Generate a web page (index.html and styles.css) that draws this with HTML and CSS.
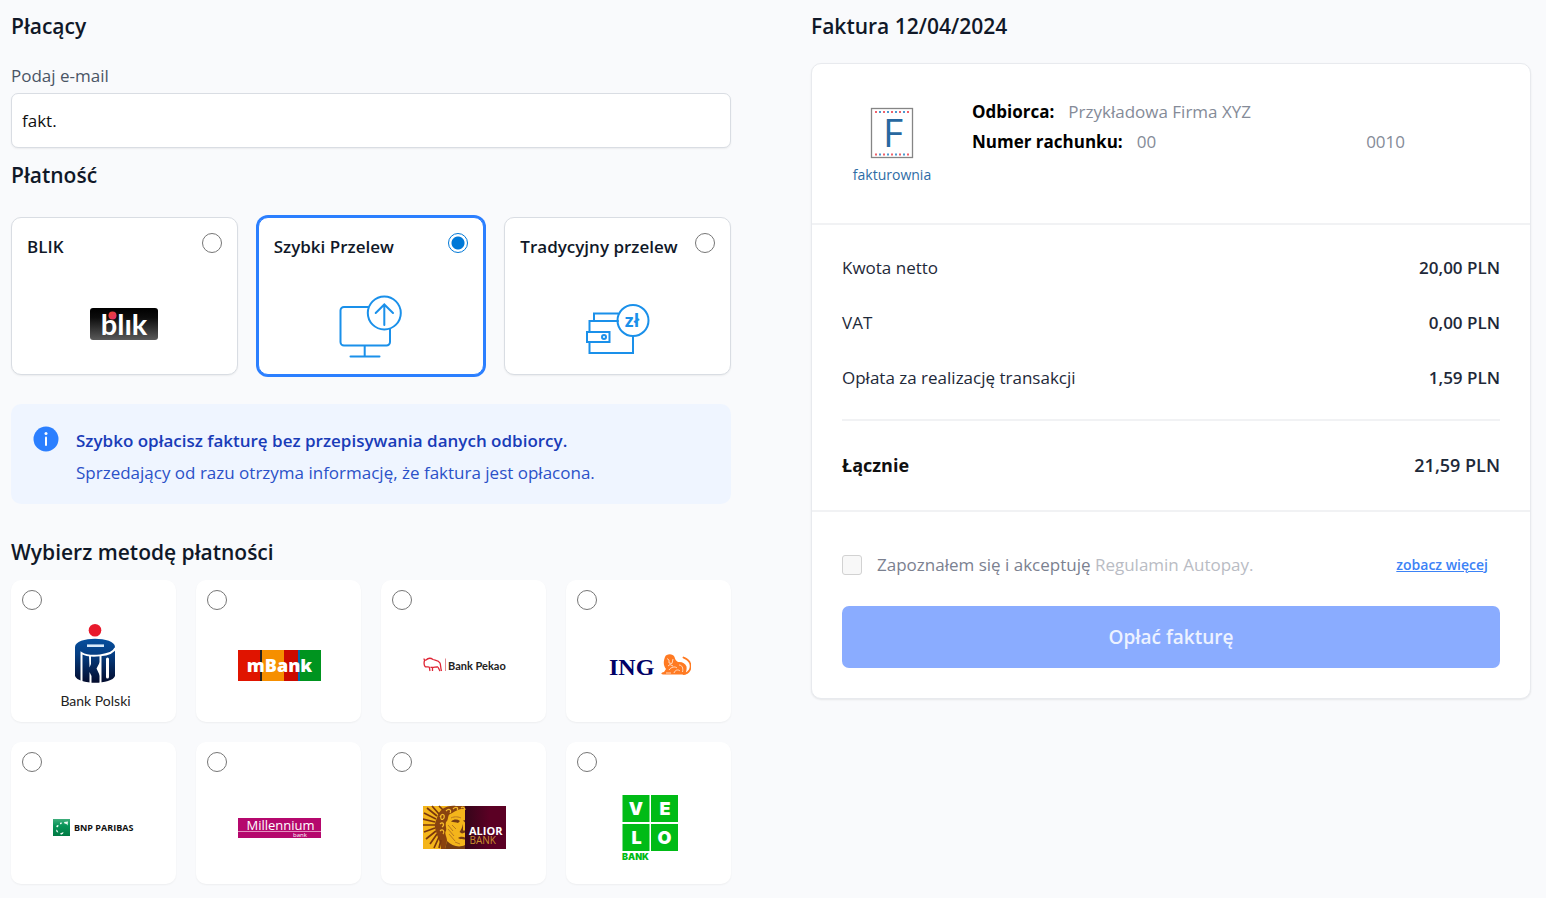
FILE: index.html
```html
<!DOCTYPE html>
<html lang="pl">
<head>
<meta charset="utf-8">
<meta name="viewport" content="width=device-width, initial-scale=1">
<title>Faktura 12/04/2024</title>
<link rel="stylesheet" href="styles.css">
</head>
<body>
<main class="page">
  <form class="payer">
    <h2 class="heading">Płacący</h2>
    <label class="field-label" for="email">Podaj e-mail</label>
    <input class="field" id="email" type="text" value="fakt.">

    <h2 class="heading heading-payment">Płatność</h2>
    <div class="types">
      <label class="type">
        <span class="type-head"><span class="type-name">BLIK</span><input class="radio" type="radio" name="type"></span>
        <svg class="type-art" viewBox="0 0 68 64" width="68" height="64" aria-hidden="true">
          <defs><linearGradient id="blik" x1="0" y1="0" x2="0" y2="1"><stop offset="0" stop-color="#000"/><stop offset=".3" stop-color="#0c0c0c"/><stop offset="1" stop-color="#5a5a5a"/></linearGradient>
          <linearGradient id="dot" x1="0" y1="0" x2="1" y2="1"><stop offset="0" stop-color="#e8452c"/><stop offset="1" stop-color="#e0306e"/></linearGradient></defs>
          <rect x="0" y="13" width="68" height="32" rx="3" fill="url(#blik)"/>
          <text class="t-blik" x="34" y="40" text-anchor="middle">blık</text>
          <circle cx="22.500" cy="20.500" r="4" fill="url(#dot)"/>
        </svg>
      </label>
      <label class="type type-selected">
        <span class="type-head"><span class="type-name">Szybki Przelew</span><input class="radio" type="radio" name="type" checked></span>
        <svg class="type-art line" viewBox="0 0 64 64" width="64" height="64" aria-hidden="true">
          <path d="M29 12H5a3.5 3.5 0 0 0-3.500 3.500V47A3.500 3.500 0 0 0 5 50.500H47.500A3.500 3.500 0 0 0 51 47V34M25.700 50.500V61M11.500 61.500H40.500"/>
          <circle cx="45.300" cy="18" r="16.500"/>
          <path d="M45.300 30V9.500M36.700 18L45.300 9.500L54 18"/>
        </svg>
      </label>
      <label class="type">
        <span class="type-head"><span class="type-name">Tradycyjny przelew</span><input class="radio" type="radio" name="type"></span>
        <svg class="type-art line" viewBox="0 0 64 64" width="64" height="64" aria-hidden="true">
          <path d="M8 26V18.500H32M32 26H3.500V37M3.500 47V58H47V41M1 37H23.500V47H1Z"/>
          <circle cx="18" cy="42" r="2"/>
          <circle cx="47" cy="25.500" r="15.500"/>
          <text class="t-zl" x="46" y="32" text-anchor="middle">zł</text>
        </svg>
      </label>
    </div>

    <div class="note">
      <svg class="note-icon" viewBox="0 0 26 26" width="26" height="26" aria-hidden="true"><circle cx="13" cy="13" r="12.500" fill="#2b7fff"/><circle cx="13" cy="7.500" r="1.500" fill="#fff"/><path d="M13 11.500V19" stroke="#fff" stroke-width="2" stroke-linecap="round"/></svg>
      <div>
        <p class="note-title">Szybko opłacisz fakturę bez przepisywania danych odbiorcy.</p>
        <p class="note-text">Sprzedający od razu otrzyma informację, że faktura jest opłacona.</p>
      </div>
    </div>

    <h2 class="heading heading-method">Wybierz metodę płatności</h2>
    <div class="banks">
      <label class="bank"><input class="radio" type="radio" name="bank" aria-label="PKO Bank Polski">
        <svg class="bank-logo" viewBox="0 0 83 92" width="83" height="92">
          <defs><linearGradient id="pko" x1="0" y1="0" x2="0" y2="1"><stop offset="0" stop-color="#064f9e"/><stop offset=".35" stop-color="#053e83"/><stop offset="1" stop-color="#030b2c"/></linearGradient></defs>
          <circle cx="42" cy="10.300" r="6.300" fill="#e8192c"/>
          <path d="M22 27C22 16 62 16 62 27V56C59 65 25 65 22 56Z" fill="url(#pko)"/>
          <path d="M62.500 28C59 36.500 36 37.500 28.500 33V62" fill="none" stroke="#fff" stroke-width="2"/>
          <path d="M47.500 35V64" stroke="#fff" stroke-width="2"/>
          <path d="M36 36H38V44L36.500 47.500ZM36.500 52L38.500 56V64H36.500ZM47.500 41L43.500 48.500L47.500 57Z" fill="#fff"/>
          <path d="M54.500 39V57" stroke="#fff" stroke-width="3" stroke-linecap="round"/>
          <path d="M34 25.700H51" stroke="#d8eafa" stroke-width="2.600"/>
          <text class="t-pko" x="42.500" y="86" text-anchor="middle">Bank Polski</text>
        </svg></label>
      <label class="bank"><input class="radio" type="radio" name="bank" aria-label="mBank">
        <svg class="bank-logo" viewBox="0 0 83 92" width="83" height="92">
          <path d="M0 30H22V61H0Z" fill="#e01400"/><path d="M22 30H24V61H22Z" fill="#26231f"/><path d="M24 30H46V61H24Z" fill="#f68f00"/><path d="M46 30H60V61H46Z" fill="#cc0a00"/><path d="M60 30H62V61H60Z" fill="#0068a8"/><path d="M62 30H83V61H62Z" fill="#00941f"/>
          <text class="t-mbank" x="41.500" y="51.500" text-anchor="middle">mBank</text>
        </svg></label>
      <label class="bank"><input class="radio" type="radio" name="bank" aria-label="Bank Pekao">
        <svg class="bank-logo" viewBox="0 0 83 92" width="83" height="92">
          <path d="M1 38.500C1 40 2 40.500 3 40C5 38 8 38 10 39.500C12.500 40.500 15.500 40.500 17 43C17.800 45 17.500 48 18.500 51M1.500 40.500C.8 43 1 45 2 46.500C3 47.500 4.500 46.500 6 47C7 48 6.500 50 7 51M7.500 47C9 48 12 47 14 47M9.500 48V51M14 46.500C16 47.500 15.500 49 17 51" fill="none" stroke="#df2535" stroke-width="1.300"/>
          <path d="M22.500 38.500V51" stroke="#e48a90" stroke-width="1"/>
          <text class="t-pekao" x="25" y="49.500">Bank Pekao</text>
        </svg></label>
      <label class="bank"><input class="radio" type="radio" name="bank" aria-label="ING">
        <svg class="bank-logo" viewBox="0 0 83 92" width="83" height="92">
          <text class="t-ing" x="1" y="54.500">ING</text>
          <path d="M57 37C58 33.500 65 33 66.500 37C67 39 68 41 70 42C74 41.500 77 43 78.500 46.500C79 49 78 52 77.500 54.500H55C52.500 54 53 52.500 56 52L58 49C55 45 55.500 41 57 37Z" fill="#ff7a22"/>
          <path d="M75.500 54C81 53.500 84 48 82 43C81 40 78.500 39 75.500 37.500" fill="none" stroke="#ff7a22" stroke-width="1.800" stroke-linecap="round"/>
          <path d="M59 38.500L61 40V43L64 43.500L65 39M60 46L62 44.500L65 46M61 50C63 47 67 46 69 48M66 53C67 50 70 49 72 51M71 45C74 45 75.500 48 74.500 52M58 53H63" fill="none" stroke="#ffe2cc" stroke-width=".9"/>
        </svg></label>
      <label class="bank"><input class="radio" type="radio" name="bank" aria-label="BNP Paribas">
        <svg class="bank-logo" viewBox="0 0 83 92" width="83" height="92">
          <defs><linearGradient id="bnp" x1="0" y1="0" x2="0" y2="1"><stop offset="0" stop-color="#3fae7c"/><stop offset=".4" stop-color="#079458"/><stop offset="1" stop-color="#007a43"/></linearGradient></defs>
          <rect x="0" y="37" width="17" height="17" fill="url(#bnp)"/>
          <path d="M11 40L15 39.500L14.500 43.500L13.500 42L11.500 41.500ZM7 40.800L9 40.500L8.500 42L7 42.300ZM4 43L5.800 43.500L4.800 45.200L3.200 45ZM3 47.500L4.500 48.500L5.300 50.500L3.600 50ZM7 51.500L10.500 50L10 51.800L8 52.800Z" fill="#eefcf4"/>
          <text class="t-bnp" x="21" y="49">BNP PARIBAS</text>
        </svg></label>
      <label class="bank"><input class="radio" type="radio" name="bank" aria-label="Millennium bank">
        <svg class="bank-logo" viewBox="0 0 83 92" width="83" height="92">
          <rect x="0" y="36" width="83" height="20" fill="#b5086d"/><path d="M0 49.500H83" stroke="#efb6d6" stroke-width=".8"/>
          <text class="t-mill" x="42.500" y="48" text-anchor="middle">Millennium</text>
          <text class="t-millbank" x="55" y="55">bank</text>
        </svg></label>
      <label class="bank"><input class="radio" type="radio" name="bank" aria-label="Alior Bank">
        <svg class="bank-logo" viewBox="0 0 83 92" width="83" height="92">
          <defs><linearGradient id="alior"><stop offset="0" stop-color="#35051a"/><stop offset=".6" stop-color="#5b0024"/></linearGradient></defs>
          <rect x="0" y="24" width="42" height="43" fill="#f4b51b"/>
          <rect x="42" y="24" width="41" height="43" fill="url(#alior)"/>
          <path d="M14 36C16 27 24 23 33 24H42V27C35 26 31 31 27 32C24 34 26 38 23 40C22 44 24 46 23 49C21 51 24 55 24 59L22 67H18C18 60 14 55 13 49C11 44 12 40 14 36Z" fill="#89430f"/>
          <path d="M14 34L4 26M13 37L1 31M12 40L0 37M12 43L0 43M12 46L1 50M13 49L3 57M14 52L7 62M16 55L11 66M18 58L16 66M16 32L9 24M20 28L16 24" stroke="#7a370f" stroke-width="1.700"/>
          <path d="M17 35C19 31 22 32 21 36C19 39 17 37 18 34M23 29C26 26 29 28 27 31M30 27C33 24 36 26 34 28M17 42C20 39 22 43 19 45M17 49C20 46 22 50 20 52M38 26C40 24 42 26 42 28" fill="none" stroke="#f6bd2c" stroke-width="1.200"/>
          <path d="M28 39.500C31 37 34 37 37 39L35 41C33 40 30.500 40.500 28 39.500ZM40 38.500L42 38V40.500ZM40 42C39 46 38 48 36.500 50L39 51.500L42 50.500V48.500L40 48.500ZM35 56C37 54.500 40 54.500 42 55.500V57.500C39 57 37 57.500 35 56ZM24 59C29 64 36 66 42 63V67H22Z" fill="#753b13"/>
          <path d="M25 43L30 49M25 47L31 54M26 52L32 59M28 36C32 34 36 35 38 36M32 60L37 62M29 43L33 47" fill="none" stroke="#b9781f" stroke-width="1"/>
          <text class="t-alior" x="46" y="52.500">ALIOR</text>
          <text class="t-aliorbank" x="46.500" y="62">BANK</text>
        </svg></label>
      <label class="bank"><input class="radio" type="radio" name="bank" aria-label="Velo Bank">
        <svg class="bank-logo" viewBox="0 0 83 92" width="83" height="92">
          <path d="M14.500 13H41.500V40H14.500ZM43 13H70V40H43ZM14.500 42H41.500V69H14.500ZM43 42H70V69H43Z" fill="#00bb16"/>
          <g class="t-velo" text-anchor="middle"><text x="28" y="33">V</text><text x="57" y="33">E</text><text x="28.500" y="62">L</text><text x="56.500" y="62">O</text></g>
          <text class="t-velobank" x="14" y="77.500">BANK</text>
        </svg></label>
    </div>
  </form>

  <section class="invoice">
    <h2 class="heading">Faktura 12/04/2024</h2>
    <div class="card">
      <div class="recipient">
        <div class="brand">
          <svg class="brand-mark" viewBox="0 0 42 50" width="42" height="50" aria-hidden="true">
            <rect x=".5" y=".5" width="41" height="49" fill="#fff" stroke="#858585" stroke-width="1.300"/>
            <g stroke-width="2" stroke-dasharray="2 6"><path d="M4 4H39M4 46.500H39" stroke="#f0616b"/><path d="M8 4H39M8 46.500H39" stroke="#4b9ad0"/></g>
            <text class="t-f" x="22" y="39" text-anchor="middle">F</text>
          </svg>
          <span class="brand-name">fakturownia</span>
        </div>
        <dl class="details">
          <div class="detail"><dt>Odbiorca:</dt><dd>Przykładowa Firma XYZ</dd></div>
          <div class="detail"><dt>Numer rachunku:</dt><dd class="account"><span>00</span><span>0010</span></dd></div>
        </dl>
      </div>
      <dl class="amounts">
        <div class="amount"><dt>Kwota netto</dt><dd>20,00 PLN</dd></div>
        <div class="amount"><dt>VAT</dt><dd>0,00 PLN</dd></div>
        <div class="amount"><dt>Opłata za realizację transakcji</dt><dd>1,59 PLN</dd></div>
        <div class="amount total"><dt>Łącznie</dt><dd>21,59 PLN</dd></div>
      </dl>
      <div class="confirm">
        <div class="terms">
          <input class="check" id="terms" type="checkbox" disabled>
          <label class="terms-label" for="terms">Zapoznałem się i akceptuję <span class="terms-doc">Regulamin Autopay.</span></label>
          <a class="more" href="#terms">zobacz więcej</a>
        </div>
        <button class="pay" type="button" disabled>Opłać fakturę</button>
      </div>
    </div>
  </section>
</main>
</body>
</html>
```
FILE: styles.css
```css
* { box-sizing: border-box; }

body {
  margin: 0;
  background: #f9fafc;
  color: #1e2939;
  font-family: "Open Sans", "Noto Sans", sans-serif;
  font-size: 17px;
  line-height: 24px;
}

h2, p, dl, dd { margin: 0; }
svg { display: block; }

.page {
  display: grid;
  grid-template-columns: 1fr 1fr;
  gap: 80px;
  align-items: start;
  padding: 12px 15px 14px 11px;
}

.heading {
  font-size: 21px;
  font-weight: 600;
  line-height: 28px;
  color: #101828;
}

.field-label {
  display: block;
  margin: 24px 0 5px;
  font-weight: 500;
  color: #4a5565;
}

.field {
  display: block;
  width: 100%;
  height: 55px;
  padding: 0 10px;
  border: 1px solid #d9dde3;
  border-radius: 7px;
  background: #fff;
  box-shadow: 0 1px 2px rgba(0, 0, 0, .06);
  font: inherit;
  color: #101010;
}

.heading-payment { margin: 13px 0 28px; }
.heading-method { margin: 34px 0 14px; }

.types {
  display: grid;
  grid-template-columns: repeat(3, 1fr);
  gap: 20px;
}

.type {
  padding: 15px;
  border: 1px solid #d9dde3;
  border-radius: 10px;
  background: #fff;
  box-shadow: 0 1px 2px rgba(0, 0, 0, .06);
}

.type-selected {
  border-color: #2b7fff;
  box-shadow: 0 0 0 2px #2b7fff;
}

.type-head {
  display: flex;
  justify-content: space-between;
  align-items: flex-start;
}

.type-name {
  font-weight: 600;
  line-height: 28px;
  color: #101828;
  white-space: nowrap;
}

.type-art { margin: 34px auto 0; }

.line {
  fill: none;
  stroke: #1a90ea;
  stroke-width: 2;
  stroke-linecap: round;
}

.radio {
  appearance: none;
  flex: none;
  display: block;
  width: 20px;
  height: 20px;
  margin: 0;
  border: 1px solid #767676;
  border-radius: 50%;
  background: #fff;
}

.radio:checked {
  border-color: #0078d7;
  background: radial-gradient(circle, #0078d7 6px, #fff 7px);
}

.note {
  display: flex;
  gap: 17px;
  margin-top: 29px;
  padding: 21px 22px 15px;
  border-radius: 10px;
  background: #eff5ff;
  line-height: 32px;
}

.note-icon { flex: none; margin-top: 1px; }
.note-title { font-weight: 600; color: #193cb8; }
.note-text { color: #2b51c8; }

.banks {
  display: grid;
  grid-template-columns: repeat(4, 1fr);
  gap: 20px;
}

.bank {
  padding: 10px 10px 10px 11px;
  border-radius: 10px;
  background: #fff;
  box-shadow: 0 1px 2px rgba(0, 0, 0, .05);
}

.bank-logo { margin: 10px auto 0; }

.card {
  margin-top: 23px;
  border: 1px solid #e8eaee;
  border-radius: 10px;
  background: #fff;
  box-shadow: 0 1px 2px rgba(0, 0, 0, .08);
}

.recipient {
  display: flex;
  gap: 30px;
  min-height: 161px;
  padding: 33px 30px;
  border-bottom: 2px solid #f1f2f4;
}

.brand {
  display: flex;
  flex-direction: column;
  align-items: center;
  gap: 5px;
  flex: none;
  width: 100px;
  padding-top: 11px;
}

.brand-mark { overflow: visible; }
.brand-name { font-size: 14px; color: #2e6ca5; }

.details { flex: 1; line-height: 30px; }
.detail { display: flex; gap: 14px; }
.detail dt { font-weight: 700; color: #000; }
.detail dd { color: #858b98; }
.account { display: flex; gap: 210px; }

.amounts { padding: 15px 30px 0; }

.amount {
  display: flex;
  justify-content: space-between;
  line-height: 55px;
}

.amount dd { font-weight: 600; }

.total {
  margin-top: 14px;
  border-top: 2px solid #f1f2f4;
  font-size: 18px;
  line-height: 89px;
}

.total dt { font-weight: 700; color: #101010; }

.confirm {
  padding: 41px 30px 30px;
  border-top: 2px solid #f1f2f4;
}

.terms {
  display: flex;
  align-items: center;
  padding-right: 12px;
}

.check {
  appearance: none;
  width: 20px;
  height: 20px;
  margin: 0 15px 0 0;
  border: 1px solid #d2d2d2;
  border-radius: 3px;
  background: #f8f8f8;
}

.terms-label { color: #7b8190; }
.terms-doc { color: #b9bcc4; }

.more {
  margin-left: auto;
  font-size: 14px;
  font-weight: 600;
  color: #3b82f6;
}

.pay {
  display: block;
  width: 100%;
  height: 62px;
  margin-top: 29px;
  border: 0;
  border-radius: 7px;
  background: #8aacff;
  font: inherit;
  font-size: 19px;
  font-weight: 600;
  color: #edf2ff;
}

/* Lettering inside the logos */
.t-blik { font: 700 29px Lato, sans-serif; fill: #fff; }
.t-zl { font: 700 18px "Open Sans", sans-serif; fill: #1a90ea; stroke: none; }
.t-pko { font: 400 14px Lato, sans-serif; fill: #222; }
.t-mbank { font: 800 18px "Open Sans", sans-serif; fill: #fff; }
.t-pekao { font: 700 11px Lato, sans-serif; fill: #222; }
.t-ing { font: 700 24px "Liberation Serif", serif; fill: #000066; }
.t-bnp { font: 700 9px "Open Sans", sans-serif; fill: #111; }
.t-mill { font: 500 13px "Open Sans", sans-serif; fill: #fff; }
.t-millbank { font: 400 6px "Open Sans", sans-serif; fill: #fff; }
.t-alior { font: 700 11px "Open Sans", sans-serif; fill: #fff; }
.t-aliorbank { font: 400 10px "Open Sans", sans-serif; fill: #c98f2c; }
.t-velo { font: 900 18px Inter, sans-serif; fill: #fff; }
.t-velobank { font: 900 9px Inter, sans-serif; fill: #00bb16; }
.t-f { font: 400 39px "Open Sans", sans-serif; fill: #2868a0; }
```
